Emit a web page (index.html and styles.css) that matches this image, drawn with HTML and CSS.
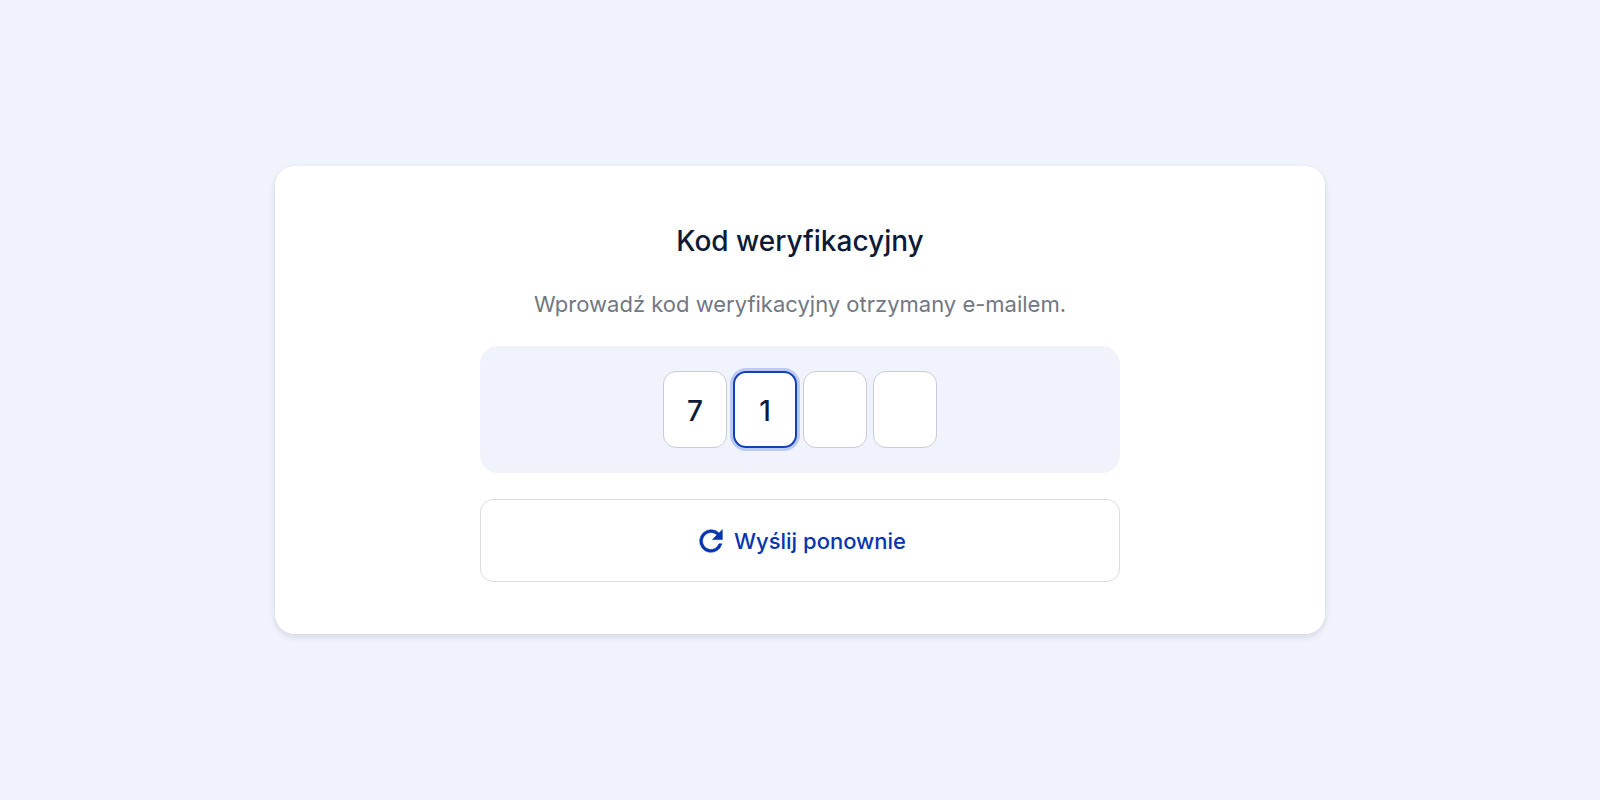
FILE: index.html
```html
<!DOCTYPE html>
<html lang="pl">
<head>
    <meta charset="UTF-8">
    <meta name="viewport" content="width=device-width, initial-scale=1.0">
    <title>Kod weryfikacyjny</title>
    <link rel="stylesheet" href="styles.css">
</head>
<body>

    <form class="card">
        <h1 id="code-title">Kod weryfikacyjny</h1>
        <p class="hint">Wprowadź kod weryfikacyjny otrzymany e-mailem.</p>

        <!-- Code digits -->
        <div class="code" role="group" aria-labelledby="code-title">
            <input class="digit" type="text" inputmode="numeric" maxlength="1" aria-label="Cyfra 1" value="7">
            <input class="digit active" type="text" inputmode="numeric" maxlength="1" aria-label="Cyfra 2" value="1">
            <input class="digit" type="text" inputmode="numeric" maxlength="1" aria-label="Cyfra 3">
            <input class="digit" type="text" inputmode="numeric" maxlength="1" aria-label="Cyfra 4">
        </div>

        <button class="resend" type="button">
            <svg class="icon" viewBox="0 0 24 24" aria-hidden="true">
                <path d="M17.65 6.35A7.96 7.96 0 0 0 12 4a8 8 0 1 0 7.73 10h-2.08A6 6 0 1 1 12 6c1.66 0 3.14.69 4.22 1.78L13 11h7V4z"/>
            </svg>
            Wyślij ponownie
        </button>
    </form>

</body>
</html>
```

FILE: styles.css
```css
* {
    box-sizing: border-box;
}

body {
    margin: 0;
    padding: 24px;
    min-height: 100vh;
    display: flex;
    align-items: center;
    justify-content: center;
    font-family: Inter, sans-serif;
    background-color: #f0f3fc;
    color: #0c1a38;
}

.card {
    display: flex;
    flex-direction: column;
    align-items: center;
    width: 100%;
    max-width: 1050px;
    padding: 52px 24px;
    background-color: white;
    border-radius: 20px;
    box-shadow: 0 3px 6px rgba(20, 20, 40, 0.12);
}

h1 {
    margin: 0 0 24px;
    font-size: 28px;
    font-weight: 500;
    line-height: 46px;
}

.hint {
    margin: 0 0 26px;
    font-size: 22px;
    line-height: 32px;
    color: #717784;
}

/* Code digits */
.code {
    display: flex;
    justify-content: center;
    gap: 6px;
    width: 100%;
    max-width: 640px;
    margin-bottom: 26px;
    padding: 25px;
    background-color: #f0f3fc;
    border-radius: 18px;
}

.digit {
    width: 64px;
    height: 77px;
    padding: 2px 0 0;
    border: 1px solid #c9ccd2;
    border-radius: 13px;
    background-color: white;
    font-family: inherit;
    font-size: 28px;
    font-weight: 500;
    text-align: center;
    color: inherit;
    outline: none;
}

.digit.active,
.digit:focus {
    border: 2px solid #1241b5;
    box-shadow: 0 0 0 3px #bccbf3;
}

.resend {
    display: flex;
    align-items: center;
    justify-content: center;
    gap: 6px;
    width: 100%;
    max-width: 640px;
    height: 83px;
    border: 1px solid #dcdde0;
    border-radius: 13px;
    background-color: white;
    font-family: inherit;
    font-size: 22px;
    font-weight: 500;
    color: #0635b0;
    cursor: pointer;
}

.resend:hover {
    background-color: #f8faff;
}

.icon {
    width: 34px;
    height: 34px;
    fill: currentColor;
    stroke: currentColor;
    stroke-width: 0.4;
}
```
